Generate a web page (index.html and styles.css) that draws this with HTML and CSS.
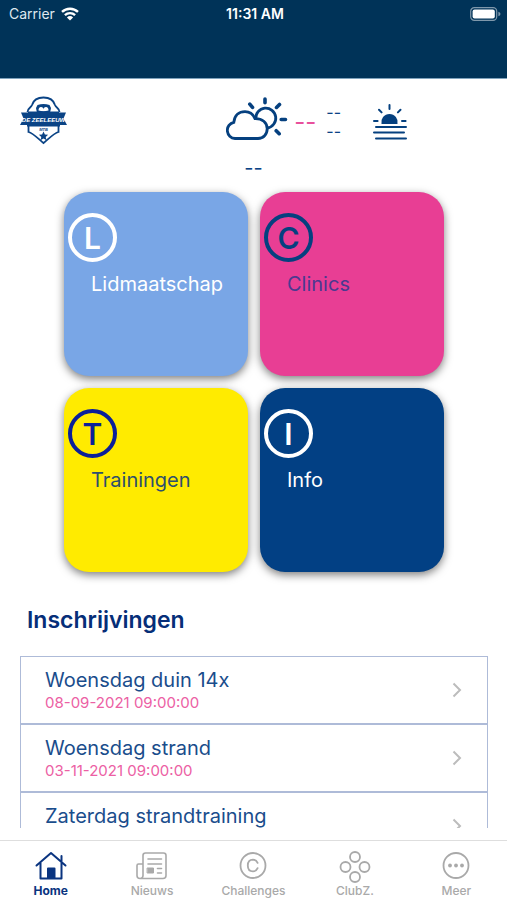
FILE: index.html
```html
<!DOCTYPE html>
<html lang="nl">
<head>
<meta charset="utf-8">
<meta name="viewport" content="width=device-width, initial-scale=1">
<title>De Zeeleeuw</title>
<link rel="stylesheet" href="styles.css">
</head>
<body>
<header class="topbar">
  <div class="status">
    <div class="carrier">
      <span>Carrier</span>
      <svg width="18" height="14" viewBox="0 0 18 14" fill="none" stroke="#fff" stroke-width="2.4" aria-hidden="true">
        <path d="M1 4.9a11.6 11.6 0 0 1 16 0"/>
        <path d="M3.9 8.1a7.5 7.5 0 0 1 10.2 0"/>
        <path d="M9 13.6 5.9 10.5a4.5 4.5 0 0 1 6.2 0z" fill="#fff" stroke="none"/>
      </svg>
    </div>
    <time class="clock">11:31 AM</time>
    <svg class="battery" width="31" height="14" viewBox="0 0 31 14" aria-hidden="true">
      <rect x=".7" y=".7" width="26" height="12.6" rx="3.6" fill="none" stroke="#7f98ab" stroke-width="1.2"/>
      <rect x="2.6" y="2.6" width="22.2" height="8.8" rx="2" fill="#fff"/>
      <path d="M28.4 4.8c1.6.6 2 1.400 2 2.200s-.4 1.600-2 2.200z" fill="#7f98ab"/>
    </svg>
  </div>
</header>

<main class="content">
  <section class="weather">
    <svg class="logo" width="48" height="50" viewBox="0 0 48 50" aria-label="De Zeeleeuw">
      <path d="M7.500 16c0-4 3.500-4 4.500-7C13.500 4 18 1.500 23.500 1.500S33.500 4 35 9c1 3 4.500 3 4.500 7" fill="#fff" stroke="#0a4385" stroke-width="1.800"/>
      <path d="M8.500 29v7c4 1 8 5 15 11 7-6 11-10 15-11v-7" fill="#fff" stroke="#0a4385" stroke-width="1.800"/>
      <path d="M17.500 9q6-2 12 0l1.500 3-1 5q-6.500 2.500-13 0l-1-5z" fill="#0a4385"/>
      <path d="M18.500 14.500q0-3.500 2.500-3.500 2.500 0 2.500 2.500 0-2.500 2.500-2.500 2.500 0 2.500 3.500-5 1.500-10 0z" fill="#fff"/>
      <path d="M1 16.500h7v-1h31v1h7l-2.500 6 3.500 6.500h-7v1.500H7V29H0l3.500-6.500z" fill="#0a4385"/>
      <text x="23.500" y="26" class="logo-name">DE ZEELEEUW</text>
      <text x="23.500" y="34.500" class="logo-sub">MTB</text>
      <path d="m23.500 35.500 1.400 3 3.200.3-2.400 2.200.8 3.200-3-1.700-3 1.700.8-3.200-2.400-2.200 3.200-.3z" fill="#0a4385"/>
    </svg>
    <div class="forecast">
      <div class="now">
        <svg width="62" height="46" viewBox="0 0 62 46" fill="none" stroke="#05407f" stroke-linecap="round" aria-hidden="true">
          <path stroke-width="2.800" d="M29.800 22.800A10 10 0 1 1 41.500 32"/>
          <path stroke-width="2.800" fill="#fff" d="M9 42.500a8.200 8.200 0 0 1-1.200-16.200C8.500 19.500 13 15.600 19 15.600c5 0 8.200 2.600 10 7 7.200-.2 12.200 4 12.200 10.200 0 5.700-3.900 9.700-9.200 9.700z"/>
          <path stroke-width="3.600" d="M39 3v3.800M23.800 8.200l2.700 3.200M53.500 8.400l-3 3M55.200 23.500h4.300M50.200 34.700l3 3"/>
        </svg>
        <span class="temp">--</span>
        <div class="range"><span>--</span><span>--</span></div>
      </div>
      <p class="place">--</p>
    </div>
    <svg class="sunset" width="36" height="38" viewBox="0 0 36 38" stroke="#05407f" stroke-width="2" stroke-linecap="round" fill="none" aria-hidden="true">
      <path d="M9.500 21a8.200 8.200 0 1 1 16 0z" fill="#05407f" stroke="none"/>
      <path d="M17.500 2v4M7 6.800l2.600 2.600M28.500 6.800l-2.600 2.600M2 18h3.600M30 18h3.600M4 24h30M2 29.500h30M4 35.500h30"/>
    </svg>
  </section>

  <nav class="tiles" aria-label="Onderdelen">
    <a class="tile sky" href="#lidmaatschap"><span class="badge" aria-hidden="true">L</span><span class="name">Lidmaatschap</span></a>
    <a class="tile pink" href="#clinics"><span class="badge" aria-hidden="true">C</span><span class="name">Clinics</span></a>
    <a class="tile yellow" href="#trainingen"><span class="badge" aria-hidden="true">T</span><span class="name">Trainingen</span></a>
    <a class="tile navy" href="#info"><span class="badge" aria-hidden="true">I</span><span class="name">Info</span></a>
  </nav>

  <h1 class="heading">Inschrijvingen</h1>
  <ul class="list">
    <li><a class="row" href="#1"><span class="entry"><span class="title">Woensdag duin 14x</span><time class="date">08-09-2021 09:00:00</time></span>
      <svg width="10" height="16" viewBox="0 0 10 16" aria-hidden="true"><path d="m1.500 1.500 6.500 6.500-6.500 6.500"/></svg></a></li>
    <li><a class="row" href="#2"><span class="entry"><span class="title">Woensdag strand</span><time class="date">03-11-2021 09:00:00</time></span>
      <svg width="10" height="16" viewBox="0 0 10 16" aria-hidden="true"><path d="m1.500 1.500 6.500 6.500-6.500 6.500"/></svg></a></li>
    <li><a class="row" href="#3"><span class="entry"><span class="title">Zaterdag strandtraining</span></span>
      <svg width="10" height="16" viewBox="0 0 10 16" aria-hidden="true"><path d="m1.500 1.500 6.500 6.500-6.500 6.500"/></svg></a></li>
  </ul>
</main>

<nav class="tabs" aria-label="Hoofdmenu">
  <a class="tab active" href="#home">
    <svg width="32" height="30" viewBox="0 0 32 30" fill="none" stroke="#0a3480" stroke-width="2" stroke-linecap="round" stroke-linejoin="round" aria-hidden="true"><path d="M1.500 14.500 16 2l14.500 12.500M5.500 12v15.500h21V12M26.500 10V5"/><path d="M13 27V17.500h6.500V27z" fill="#0a3480"/></svg>
    <span>Home</span></a>
  <a class="tab" href="#nieuws">
    <svg width="32" height="30" viewBox="0 0 32 30" fill="none" stroke="#a9a9a9" stroke-width="1.600" stroke-linecap="round" aria-hidden="true"><path d="M7 25V4.500Q7 2 9.500 2h18Q30 2 30 4.500v20q0 3-3 3H4q-3 0-3-3v-10Q1 13 2.500 13H7M7 24q0 3.500-3 3.500M12 8h13.500M12 13h13.500M21.500 17.500h4M21.500 22h4"/><path d="M11.500 17h6v5h-6z" fill="#a9a9a9" stroke-width="1"/></svg>
    <span>Nieuws</span></a>
  <a class="tab" href="#challenges">
    <svg width="32" height="30" viewBox="0 0 32 30" fill="none" stroke="#a9a9a9" stroke-width="1.800" stroke-linecap="round" aria-hidden="true"><circle cx="16" cy="14.500" r="12.500"/><path d="M20.600 11.800a5.200 5.200 0 0 0-4.600-3.200c-3.100 0-5.200 2.300-5.200 5.900s2.100 5.900 5.200 5.900a5.200 5.200 0 0 0 4.600-3.200"/></svg>
    <span>Challenges</span></a>
  <a class="tab" href="#clubz">
    <svg width="32" height="34" viewBox="0 0 32 34" fill="none" stroke="#a9a9a9" stroke-width="1.800" aria-hidden="true"><circle cx="16" cy="8" r="5"/><circle cx="6.500" cy="18" r="5"/><circle cx="25.500" cy="18" r="5"/><circle cx="16" cy="28" r="5"/></svg>
    <span>ClubZ.</span></a>
  <a class="tab" href="#meer">
    <svg width="32" height="30" viewBox="0 0 32 30" fill="none" stroke="#a9a9a9" stroke-width="1.800" aria-hidden="true"><circle cx="16" cy="14.500" r="12.500"/><g fill="#a9a9a9" stroke="none"><circle cx="10" cy="14.500" r="1.900"/><circle cx="16" cy="14.500" r="1.900"/><circle cx="22" cy="14.500" r="1.900"/></g></svg>
    <span>Meer</span></a>
</nav>
</body>
</html>
```

FILE: styles.css
```css
* { box-sizing: border-box; }

body {
  margin: 0;
  height: 100vh;
  display: flex;
  flex-direction: column;
  background: #fff;
  color: #0a4385;
  font-family: Inter, "Liberation Sans", sans-serif;
}

a { color: inherit; text-decoration: none; }
svg { display: block; flex: none; }

.topbar {
  flex: none;
  height: 79px;
  padding: 5px 6px 0 9px;
  background: #003358;
  border-bottom: 1px solid #7fa3bd;
  color: #fff;
}

.status {
  display: grid;
  grid-template-columns: 1fr auto 1fr;
  align-items: center;
  height: 18px;
  font-size: 14px;
  line-height: 18px;
}

.carrier { display: flex; align-items: center; gap: 6px; }
.carrier span { color: #dfe8ef; }
.clock { font-weight: 600; }
.battery { justify-self: end; }

.content {
  flex: 1;
  min-height: 0;
  overflow: hidden;
  margin-bottom: 12px;
  padding: 0 19px 0 20px;
}

.weather {
  display: flex;
  height: 113px;
  padding-top: 17px;
}

.logo-name, .logo-sub {
  font-family: "Liberation Sans", sans-serif;
  font-weight: 700;
  font-style: italic;
  text-anchor: middle;
}
.logo-name { font-size: 6px; fill: #fff; }
.logo-sub { font-size: 4px; fill: #0a4385; }

.forecast { margin-left: auto; }
.now { display: flex; align-items: center; height: 46px; }
.temp, .range { margin-top: 6px; }
.temp {
  margin-left: 6px;
  font-size: 24px;
  line-height: 26px;
  white-space: nowrap;
  color: #e8509c;
}
.range {
  display: flex;
  flex-direction: column;
  margin-left: 10px;
  font-size: 16px;
  line-height: 19px;
}
.place {
  margin: 15px 0 0 18px;
  font-size: 20px;
  line-height: 22px;
}
.sunset { margin: 7px 80px 0 31px; }

.tiles {
  display: grid;
  grid-template-columns: 1fr 1fr;
  gap: 12px;
  width: 380px;
  max-width: 100%;
  margin: 0 auto;
}

.tile {
  display: flex;
  flex-direction: column;
  aspect-ratio: 1;
  padding: 21px 4px;
  border-radius: 25px;
  box-shadow: 0 3px 9px rgba(0, 0, 0, 0.5);
}

.badge {
  display: flex;
  align-items: center;
  justify-content: center;
  width: 49px;
  height: 49px;
  border: 4px solid;
  border-radius: 50%;
  font-size: 30px;
  font-weight: 600;
}

.name {
  margin: 9px 0 0 23px;
  font-size: 20px;
  line-height: 26px;
}

.sky { background: #79a6e6; color: #fff; }
.pink { background: #e83e94; color: #4b3990; }
.pink .badge { color: #05407f; }
.yellow { background: #ffeb00; color: #2e4f6c; }
.yellow .badge { color: #0b2099; }
.navy { background: #024084; color: #fff; }

.heading {
  margin: 33px 7px 21px;
  color: #062e78;
  font-size: 23px;
  font-weight: 600;
  line-height: 30px;
}

.list { margin: 0; padding: 0; list-style: none; }

.row {
  display: flex;
  align-items: center;
  justify-content: space-between;
  height: 68px;
  padding: 0 25px 0 24px;
  border: 1px solid #aebbd8;
}
.row svg { fill: none; stroke: #bcbcbc; stroke-width: 2; }

.entry { align-self: stretch; display: flex; flex-direction: column; padding-top: 11px; }
.title { font-size: 20px; line-height: 24px; color: #1a4d8c; }
.date { font-size: 15px; line-height: 22px; color: #ec60a4; }

.tabs {
  flex: none;
  display: grid;
  grid-template-columns: repeat(5, 1fr);
  height: 60px;
  padding-top: 8px;
  border-top: 1px solid #dedede;
}

.tab {
  display: flex;
  flex-direction: column;
  align-items: center;
  color: #a9a9a9;
  font-size: 12px;
  font-weight: 500;
  line-height: 16px;
}
.tab svg { height: 34px; }
.active { color: #0a3480; font-weight: 700; }
```
